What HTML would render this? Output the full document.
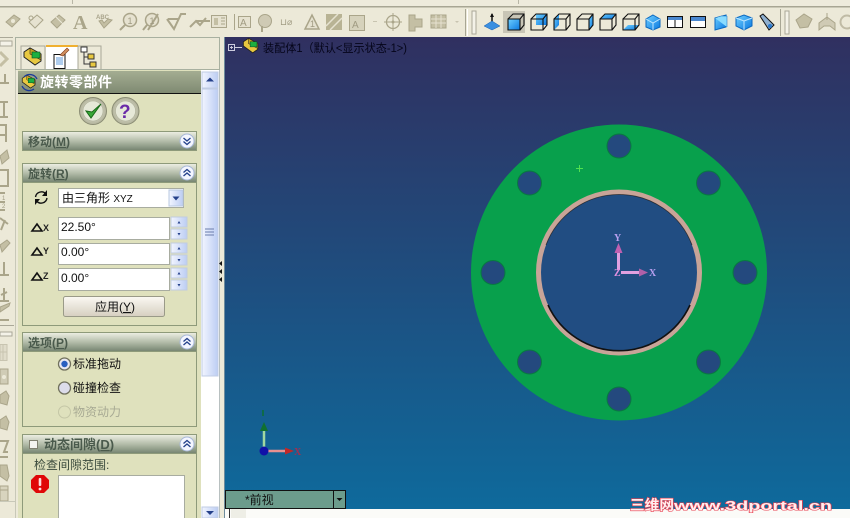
<!DOCTYPE html>
<html><head><meta charset="utf-8"><style>
html,body{margin:0;padding:0;background:#ece9d8;overflow:hidden}
svg{display:block}
text{font-family:"Liberation Sans","WenQuanYi Zen Hei","Noto Sans CJK SC",sans-serif;font-size:12px;fill:#111}
.h{font-weight:bold;fill:#4a5a4c;font-size:12px}
.f{fill:#c4bfa4;stroke:#aaa58a;stroke-width:1}
.l{fill:none;stroke:#aaa58a;stroke-width:2}
</style></head><body>
<svg width="850" height="518" viewBox="0 0 850 518" xmlns="http://www.w3.org/2000/svg">
<defs>
<linearGradient id="bg" x1="0" y1="0" x2="0" y2="1"><stop offset="0" stop-color="#303060"/><stop offset="1" stop-color="#0e6a9c"/></linearGradient>
<linearGradient id="hd" x1="0" y1="0" x2="0" y2="1"><stop offset="0" stop-color="#eef0e4"/><stop offset=".5" stop-color="#b4bdaa"/><stop offset="1" stop-color="#74836f"/></linearGradient>
<linearGradient id="ph" x1="0" y1="0" x2="0" y2="1"><stop offset="0" stop-color="#a4ad92"/><stop offset="1" stop-color="#7f8a72"/></linearGradient>
<linearGradient id="sb" x1="0" y1="0" x2="1" y2="0"><stop offset="0" stop-color="#f2f5ff"/><stop offset="1" stop-color="#bccdf3"/></linearGradient>
<linearGradient id="cu" x1="0" y1="0" x2="1" y2="1"><stop offset="0" stop-color="#6fd0ff"/><stop offset="1" stop-color="#0a78e0"/></linearGradient>
<linearGradient id="bt" x1="0" y1="0" x2="0" y2="1"><stop offset="0" stop-color="#fbf9f3"/><stop offset="1" stop-color="#d6cfc0"/></linearGradient>
<radialGradient id="rb"><stop offset="0" stop-color="#f4f3ee"/><stop offset="1" stop-color="#b2b39a"/></radialGradient>
<g id="chevU"><circle r="7" fill="#f4f6ff" stroke="#a8b8d8"/><path d="M-3.5 -.5L0 -3.5L3.5 -.5M-3.5 3L0 0L3.5 3" fill="none" stroke="#24408a" stroke-width="1.3"/></g>
<g id="chevD"><circle r="7" fill="#f4f6ff" stroke="#a8b8d8"/><path d="M-3.5 -3L0 0L3.5 -3M-3.5 .5L0 3.5L3.5 .5" fill="none" stroke="#24408a" stroke-width="1.3"/></g>
<g id="wire"><path d="M-7 -3H5V8H-7ZM-7 -3L-2 -8H9V3L5 8M5 -3L9 -8" fill="none" stroke="#111" stroke-width="1.1"/></g>
<g id="spin"><rect x="0" y="0" width="16" height="10" fill="url(#sb)" stroke="#c0cce0"/><rect x="0" y="12" width="16" height="10" fill="url(#sb)" stroke="#c0cce0"/><path d="M6.5 6.5L8 4L9.5 6.5ZM6.5 16L8 18.5L9.5 16Z" fill="#24408a"/></g>
<g id="asm"><path d="M-9 -5L-3 -9L8 -3V4L2 8L-9 0Z" fill="#e8c840" stroke="#222"/><path d="M-3 -9L8 -3V3L-3 -3Z" fill="#c9a020" stroke="#222" stroke-width=".6"/><rect x="-1" y="-5" width="8" height="6" fill="#1cb040" stroke="#0a5020" stroke-width=".6"/></g>
</defs>

<!-- top strip and toolbar -->
<rect width="850" height="37" fill="#ece9d8"/>
<rect y="0" width="850" height="6" fill="#eeebdc"/>
<rect y="6" width="850" height="1.5" fill="#a8a694"/>
<rect x="72" y="0" width="1" height="4" fill="#b8b6a6"/><rect x="518" y="0" width="1" height="4" fill="#b8b6a6"/>

<!-- faded toolbar icons -->
<g>
<path class="f" d="M6 22L14 15L20 19L12 27Z"/><circle cx="13" cy="21" r="2" fill="#ece9d8"/>
<path d="M29 22L37 15L43 20L35 28Z" fill="#e6e2d0" stroke="#aaa58a"/><circle cx="31" cy="18" r="2" fill="none" stroke="#aaa58a"/>
<path class="f" d="M51 22L59 15L65 20L57 28Z"/><path d="M55 16L63 24" stroke="#ece9d8"/>
<text x="73" y="29" style="font:bold 20px 'Liberation Serif',serif;fill:#aaa58a">A</text>
<text x="96" y="19" style="font:bold 6px 'Liberation Sans';fill:#a8a38a">ABC</text><path class="f" d="M99 21L104 28L112 20L108 19L104 23L102 20Z"/>
<circle cx="130" cy="20" r="6.5" fill="#e6e2d0" stroke="#aaa58a" stroke-width="1.5"/><path class="l" d="M125 25L120 30"/><text x="127.500" y="24" style="font-size:9px;fill:#a09b82">1</text>
<circle cx="152" cy="20" r="6.5" fill="#e6e2d0" stroke="#aaa58a" stroke-width="1.5"/><path class="l" d="M147 25L143 30M148 30L158 14"/><text x="149.500" y="24" style="font-size:9px;fill:#a09b82">1</text>
<path class="l" d="M167 19L174 29L181 14H186M168 19H179"/>
<path class="l" d="M190 27L196 21L200 25L206 18M196 21H210"/>
<rect x="211.500" y="15.500" width="15" height="12" fill="#e6e2d0" stroke="#aaa58a"/><rect x="214" y="18" width="4" height="7" fill="#c4bfa4"/><path d="M221 18h4M221 21h4M221 24h4" stroke="#aaa58a"/>
<path d="M234.500 14V30" stroke="#aaa58a"/><rect x="238.500" y="16.500" width="12" height="11" fill="#e6e2d0" stroke="#aaa58a"/><text x="240" y="26" style="font-size:10px;fill:#a09b82">A</text>
<circle cx="265" cy="21" r="6.500" fill="#cfcab4" stroke="#aaa58a"/><path class="l" d="M262 26V32"/>
<text x="280" y="25" style="font-size:9px;fill:#a09b82">⊔⌀</text>
<path d="M305 29L312 15L319 29Z" fill="#e6e2d0" stroke="#aaa58a" stroke-width="1.500"/><text x="310" y="27" style="font-size:9px;fill:#a09b82">1</text>
<rect x="326" y="14" width="16" height="16" fill="#b8b394"/><path d="M326 26L338 14M330 30L342 18" stroke="#e6e2d0" stroke-width="1.500"/>
<rect x="349.500" y="15.500" width="15" height="15" fill="#d6d2bc" stroke="#aaa58a"/><text x="352" y="28" style="font-size:10px;fill:#a09b82">A</text>
<path d="M373 21h4v1h-4z" fill="#c8c4b0"/>
<circle cx="393" cy="22" r="6.500" fill="none" stroke="#aaa58a" stroke-width="1.300"/><path d="M393 13V31M384 22H402" stroke="#aaa58a"/><circle cx="393" cy="22" r="1.500" fill="#aaa58a"/>
<path class="f" d="M409 15H415V19H422V27H415V31H409Z"/>
<rect x="431" y="15" width="15" height="13" fill="#c4bfa4" stroke="#aaa58a"/><path d="M431 19H446M431 23H446M436 15V28M441 15V28" stroke="#e6e2d0"/>
<path d="M455 21h4l-2 2z" fill="#c8c4b0"/>
</g>
<rect x="465" y="9" width="1" height="27" fill="#a8a694"/><rect x="467" y="9" width="1" height="27" fill="#fff"/>
<rect x="472" y="11" width="4" height="23" fill="#f4f2e8" stroke="#aaa898"/>

<!-- colored view icons -->
<path d="M492 14V25" stroke="#111" stroke-width="1.500"/><path d="M490 17L492 13L494 17Z" fill="#111"/><path d="M484 26L492 21L500 26L492 30Z" fill="#3a8fe0" stroke="#1a60b0" stroke-width=".5"/>
<rect x="503" y="11" width="22" height="22" fill="#c8c5b6"/>
<g transform="translate(515,22)"><path d="M-7 -3H5V8H-7Z" fill="url(#cu)"/><use href="#wire"/></g>
<g transform="translate(538,22)"><path d="M-2 -8H9V3H-2Z" fill="url(#cu)"/><use href="#wire"/></g>
<g transform="translate(561,22)"><path d="M-7 -3L-2 -8V3L-7 8Z" fill="url(#cu)"/><use href="#wire"/></g>
<g transform="translate(584,22)"><path d="M5 -3L9 -8V3L5 8Z" fill="url(#cu)"/><use href="#wire"/></g>
<g transform="translate(607,22)"><path d="M-7 -3L-2 -8H9L5 -3Z" fill="url(#cu)"/><use href="#wire"/></g>
<g transform="translate(630,22)"><path d="M-7 8L-2 3H9L5 8Z" fill="url(#cu)"/><use href="#wire"/></g>
<path d="M653 15L660 19V27L653 30L646 27V19Z" fill="url(#cu)" stroke="#0a68c0"/><path d="M646 19L653 23L660 19M653 23V30" stroke="#bfe6ff" fill="none"/>
<rect x="667.500" y="16.500" width="15" height="11" fill="#fff" stroke="#111"/><rect x="668" y="17" width="14" height="3" fill="#4a88d0"/><path d="M675 20V27" stroke="#111"/>
<rect x="690.500" y="16.500" width="15" height="11" fill="#fff" stroke="#111"/><rect x="691" y="17" width="14" height="4" fill="#4a88d0"/>
<path d="M715 18L726 15V27L715 30Z" fill="url(#cu)" stroke="#0a68c0"/><path d="M715 18L721 16H727V27" fill="#8adcff" stroke="#0a68c0" stroke-width=".5"/>
<path d="M736 18L744 15L752 18V26L744 30L736 26Z" fill="url(#cu)" stroke="#0a68c0"/><path d="M736 18L744 21L752 18M744 21V30" stroke="#bfe6ff" fill="none"/>
<path d="M760 16L763 14L774 25L769 30Z" fill="#8fb0d0" stroke="#111"/><circle cx="770" cy="26" r="2" fill="#2a7ad0"/>
<rect x="780" y="9" width="1" height="27" fill="#a8a694"/>
<rect x="785" y="11" width="4" height="23" fill="#f4f2e8" stroke="#aaa898"/>
<path class="f" d="M796 20L804 14L812 19L808 27L800 28Z"/>
<path d="M819 30V23L827 17L835 23V30L830 26H824Z" fill="#cfcab4" stroke="#aaa58a"/><path d="M827 13V20" stroke="#aaa58a"/>
<circle cx="847" cy="22" r="6.500" fill="none" stroke="#c0bba5" stroke-width="2"/>

<!-- left column -->
<rect x="0" y="37" width="225" height="481" fill="#ece9d8"/>
<rect x="0" y="37" width="13" height="1" fill="#aaa898"/><rect x="0" y="41" width="12" height="5" fill="#f4f2e8" stroke="#aaa898"/>
<rect x="15" y="37" width="1" height="481" fill="#c8c8b8"/>
<path d="M0 52L7 59L0 66" fill="none" stroke="#c4bfa4" stroke-width="3"/>
<path class="l" d="M0 83H9M5 74V83"/>
<path class="l" d="M0 102H8M0 117H8M4 102V117"/>
<path class="l" d="M0 125H6V142M0 135H6"/>
<path class="f" d="M0 156L7 150L9 158L2 164Z"/>
<path class="l" d="M0 170H8V186H0"/>
<text x="2" y="200" style="font-size:6px;fill:#a09b82">1</text><text x="2" y="208" style="font-size:6px;fill:#a09b82">2</text><path class="l" d="M0 193H5M0 202H5M0 210H5"/>
<path class="l" d="M0 218L8 224M5 220L1 230"/>
<path class="f" d="M0 245L7 240L10 243L2 252Z"/>
<path class="l" d="M4 262V275H9M0 275H9"/>
<path class="l" d="M0 301H9M4 288V300M1 295L7 292"/>
<path class="f" d="M0 307L10 303L9 306L0 312Z"/><path class="l" d="M0 320H9"/>
<rect x="0" y="325" width="14" height="1" fill="#aaa898"/><rect x="0" y="332" width="12" height="4" fill="#f4f2e8" stroke="#aaa898"/>
<rect x="0" y="344.500" width="7" height="16" fill="#e0dcca" stroke="#c8c4b0"/><path d="M0 352H7M3 345V360" stroke="#c8c4b0"/>
<rect x="0" y="369" width="8" height="15" fill="#d0ccb6" stroke="#aaa58a"/><circle cx="4" cy="377" r="2" fill="#ece9d8"/>
<path class="f" d="M0 395L6 391L9 396L7 405L0 403Z"/>
<path class="f" d="M0 420L6 416L9 422L7 430L0 428Z"/>
<path class="l" d="M0 441H8L4 452H8M0 457H8"/>
<path class="f" d="M0 465H7L9 476L7 481L0 476Z"/>
<rect x="0" y="486" width="8" height="15" fill="#d8d4be" stroke="#aaa58a"/><path d="M0 490H8" stroke="#aaa58a"/>
<rect x="0" y="501" width="15" height="1" fill="#c8c8b8"/>

<!-- tab bar -->
<path d="M15.500 70V37.500H219.500V70" fill="none" stroke="#a8b0a0"/>
<rect x="21" y="46" width="24" height="24" fill="#ece9d8" stroke="#a8a898"/>
<g transform="translate(33,57)"><use href="#asm"/></g>
<rect x="46" y="45" width="32" height="25" fill="#fff"/><rect x="46" y="45" width="32" height="2" fill="#f0b030"/>
<path d="M54 54.500H65V68.500H54Z" fill="#fff" stroke="#111"/><path d="M56 58h7M56 60h7M56 62h7M56 64h7" stroke="#2a7ad0" stroke-width=".8"/>
<path d="M60 55L67 48L69 50L63 56Z" fill="#d09060" stroke="#803818" stroke-width=".6"/>
<rect x="78" y="46" width="23" height="24" fill="#ece9d8" stroke="#a8a898"/>
<path d="M84 50V64H90M84 57H90" fill="none" stroke="#333"/><rect x="81" y="47" width="6" height="5" fill="#fff" stroke="#333"/><rect x="88" y="54" width="6" height="5" fill="#e8c840" stroke="#333"/><rect x="90" y="62" width="6" height="5" fill="#e8c840" stroke="#333"/>
<rect x="15" y="69" width="205" height="1" fill="#a8b0a0"/>

<!-- panel -->
<rect x="18" y="70" width="183" height="448" fill="#dfe1bd"/>
<rect x="18" y="71" width="183" height="22" fill="url(#ph)"/>
<rect x="18" y="93" width="183" height="1" fill="#111"/>
<g transform="translate(29,82) scale(.75)"><use href="#asm"/></g><path d="M22 86A8 8 0 0 0 34 89M24 77A8 8 0 0 1 37 79" fill="none" stroke="#1a3a9a" stroke-width="1.300"/>
<text x="40" y="87" style="font-size:14px;font-weight:bold;fill:#fff;letter-spacing:.5px">旋转零部件</text>

<circle cx="93" cy="111" r="13.500" fill="url(#rb)" stroke="#8a8c74"/><circle cx="93" cy="111" r="10" fill="#e6e8d8" stroke="#b0b29a" stroke-width=".6"/>
<path d="M86 111L91 118L101 104L92 112Z" fill="#38a838" stroke="#186818"/>
<circle cx="125.500" cy="111" r="13.500" fill="url(#rb)" stroke="#8a8c74"/><circle cx="125.500" cy="111" r="10" fill="#e6e8d8" stroke="#b0b29a" stroke-width=".6"/>
<text x="119" y="118" style="font:bold 19px 'Liberation Sans',sans-serif;fill:#6a2aa8">?</text>

<!-- move -->
<rect x="22.500" y="131.500" width="174" height="19" fill="url(#hd)" stroke="#8e9a7a"/>
<text class="h" x="28" y="146">移动(<tspan text-decoration="underline">M</tspan>)</text>
<use href="#chevD" x="187" y="141"/>

<!-- rotate -->
<rect x="22.500" y="163.500" width="174" height="162" fill="#dfe1bd" stroke="#8e9a7a"/>
<rect x="22.500" y="163.500" width="174" height="19" fill="url(#hd)" stroke="#8e9a7a"/>
<text class="h" x="28" y="178">旋转(<tspan text-decoration="underline">R</tspan>)</text>
<use href="#chevU" x="187" y="173"/>
<path d="M35.500 197A6 6 0 0 1 46 194M47 198A6 6 0 0 1 36.500 201" fill="none" stroke="#111" stroke-width="1.400"/><path d="M47 190V196H42ZM35 205V199H40Z" fill="#111"/>
<rect x="58.500" y="188.500" width="125" height="19" fill="#fff" stroke="#a8aca0"/>
<text x="62" y="202">由三角形 <tspan style="font-size:10px">XYZ</tspan></text>
<rect x="169" y="190" width="14" height="16" fill="url(#sb)" stroke="#b8c8e0"/><path d="M172.500 196.500H179.500L176 200.500Z" fill="#24408a"/>

<path d="M32 231L37 224L42 231Z" fill="none" stroke="#111" stroke-width="1.600"/><text x="43" y="231" style="font-size:9px;font-weight:bold;fill:#222">X</text>
<rect x="58.500" y="217.500" width="111" height="22" fill="#fff" stroke="#a8aca0"/><text x="61" y="231">22.50°</text>
<use href="#spin" x="171" y="217"/>
<path d="M32 255L37 248L42 255Z" fill="none" stroke="#111" stroke-width="1.600"/><text x="43" y="254" style="font-size:9px;font-weight:bold;fill:#222">Y</text>
<rect x="58.500" y="243.500" width="111" height="21" fill="#fff" stroke="#a8aca0"/><text x="61" y="256">0.00°</text>
<use href="#spin" x="171" y="243"/>
<path d="M32 280L37 273L42 280Z" fill="none" stroke="#111" stroke-width="1.600"/><text x="43" y="279" style="font-size:9px;font-weight:bold;fill:#222">Z</text>
<rect x="58.500" y="268.500" width="111" height="22" fill="#fff" stroke="#a8aca0"/><text x="61" y="282">0.00°</text>
<use href="#spin" x="171" y="268"/>
<rect x="63.500" y="296.500" width="101" height="20" rx="2" fill="url(#bt)" stroke="#9a9a88"/>
<text x="95" y="311">应用(<tspan text-decoration="underline">Y</tspan>)</text>

<!-- options -->
<rect x="22.500" y="332.500" width="174" height="94" fill="#dfe1bd" stroke="#8e9a7a"/>
<rect x="22.500" y="332.500" width="174" height="19" fill="url(#hd)" stroke="#8e9a7a"/>
<text class="h" x="28" y="347">选项(<tspan text-decoration="underline">P</tspan>)</text>
<use href="#chevU" x="187" y="342"/>
<circle cx="64.500" cy="364" r="6" fill="#e8e8f0" stroke="#70705c" stroke-width="1.300"/><circle cx="64.500" cy="364" r="3.200" fill="#2a60c0"/>
<text x="73" y="368">标准拖动</text>
<circle cx="64.500" cy="388" r="6" fill="#dcdcea" stroke="#70705c" stroke-width="1.300"/>
<text x="73" y="392">碰撞检查</text>
<circle cx="64.500" cy="412" r="6" fill="#dfe1bd" stroke="#c4c6a6"/>
<text x="73" y="416" style="fill:#a8aa94">物资动力</text>

<!-- clearance -->
<rect x="22.500" y="434.500" width="174" height="90" fill="#dfe1bd" stroke="#8e9a7a"/>
<rect x="22.500" y="434.500" width="174" height="19" fill="url(#hd)" stroke="#8e9a7a"/>
<rect x="29.500" y="440.500" width="8" height="8" fill="#f4f4f0" stroke="#808070"/>
<text class="h" x="44" y="449" style="font-size:13px">动态间隙(<tspan text-decoration="underline">D</tspan>)</text>
<use href="#chevU" x="187" y="444"/>
<text x="34" y="469" style="fill:#3a4a3c">检查间隙范围:</text>
<path d="M36 475H44L49 480V488L44 493H36L31 488V480Z" fill="#e00808"/><rect x="38.700" y="478" width="2.600" height="8" rx="1" fill="#fdd"/><circle cx="40" cy="489" r="1.400" fill="#fdd"/>
<rect x="58.500" y="475.500" width="126" height="50" fill="#fff" stroke="#a8aca0"/>

<!-- scrollbar -->
<rect x="201" y="70" width="18" height="448" fill="#fff"/>
<rect x="219" y="70" width="1" height="448" fill="#b8c0c0"/>
<rect x="202" y="72" width="16" height="16" fill="url(#sb)" stroke="#c0cce4"/><path d="M206 81.500H214L210 77.500Z" fill="#24408a"/>
<rect x="202" y="89" width="16" height="287" fill="url(#sb)" stroke="#c0cce4"/>
<path d="M205 229H214M205 232H214M205 235H214" stroke="#6a7cac"/>
<rect x="202" y="507" width="16" height="11" fill="url(#sb)" stroke="#c0cce4"/><path d="M206 511H214L210 515Z" fill="#24408a"/>
<path d="M222 261L219 263.500L222 266ZM222 269L219 271.500L222 274ZM222 277L219 279.500L222 282Z" fill="#111"/>
<rect x="224" y="37" width="1" height="481" fill="#6e8c9c"/>

<!-- viewport -->
<rect x="225" y="37" width="625" height="472" fill="url(#bg)"/>
<rect x="225" y="509" width="625" height="9" fill="#fbfbf8"/>
<rect x="231" y="509" width="15" height="9" fill="#eeeee6"/>
<rect x="229" y="509" width="1" height="9" fill="#333"/>

<!-- disc -->
<circle cx="619" cy="272.500" r="148" fill="#08a04c"/>
<circle cx="619" cy="272.500" r="83" fill="#c8a498"/>
<circle cx="619" cy="272.500" r="78" fill="#214d82"/>
<path d="M548 305A78 78 0 0 0 690 305" fill="none" stroke="#111" stroke-width="1.600"/>
<path d="M546 245A78 78 0 0 1 692 245" fill="none" stroke="#111" stroke-width=".8" opacity=".7"/>
<g fill="#24497e" stroke="#087a40">
<circle cx="619" cy="146" r="12"/><circle cx="708.500" cy="183" r="12"/><circle cx="745" cy="272.500" r="12"/><circle cx="708.500" cy="362" r="12"/><circle cx="619" cy="399" r="12"/><circle cx="529.500" cy="362" r="12"/><circle cx="493" cy="272.500" r="12"/><circle cx="529.500" cy="183" r="12"/>
</g>
<path d="M576 168.500H583M579.500 165V172" stroke="#50e050"/>

<!-- center triad -->
<path d="M618.500 270V250" stroke="#e0a0e0" stroke-width="3"/><path d="M614.500 253L618.500 243L622.500 253Z" fill="#c060b0"/>
<path d="M621 272.500H640" stroke="#e0a0e0" stroke-width="3"/><path d="M639 268.500L648 272.500L639 276.500Z" fill="#b060a8"/>
<text x="614" y="241" style="font:bold 10px 'Liberation Serif',serif;fill:#b8a0f0">Y</text>
<text x="649" y="276" style="font:bold 10px 'Liberation Serif',serif;fill:#b8a0f0">X</text>
<text x="614" y="276" style="font:bold 10px 'Liberation Serif',serif;fill:#e090e0">Z</text>

<!-- reference triad -->
<path d="M264 448V429" stroke="#a0d8a0" stroke-width="2.500"/><path d="M260 431L264 422L268 431Z" fill="#107030"/>
<path d="M263 416V410" stroke="#0e6a4a" stroke-width="2"/>
<path d="M268 451H288" stroke="#e89090" stroke-width="2.500"/><path d="M285 447.500L294 451L285 454.500Z" fill="#c02828"/>
<text x="294" y="455" style="font:bold 10px 'Liberation Serif',serif;fill:#a03050">X</text>
<circle cx="264" cy="451" r="4.500" fill="#1010a8"/>

<!-- tree -->
<rect x="228.500" y="44.500" width="6" height="6" fill="none" stroke="#ccd"/><path d="M230 47.500H233M231.500 46V49M235 47.500H242" stroke="#ccd" stroke-width=".9"/>
<g transform="translate(251,46) scale(.85)"><use href="#asm"/></g>
<text x="263" y="52" textLength="144" lengthAdjust="spacingAndGlyphs" style="font-size:11.500px;fill:#05051a">装配体1（默认&lt;显示状态-1&gt;)</text>

<!-- view tab -->
<rect x="225.500" y="490.500" width="120" height="18" fill="#6c9c8c" stroke="#111"/>
<path d="M333.500 491V508" stroke="#111"/>
<path d="M336.500 498H342.500L339.500 501Z" fill="#111"/>
<text x="245" y="504" style="fill:#111">*前视</text>

<!-- watermark -->
<text x="630" y="510" textLength="44" lengthAdjust="spacingAndGlyphs" style="font-size:14px;font-weight:bold;fill:#ffeeee;stroke:#e84050;stroke-width:1.200px;paint-order:stroke">三维网</text>
<text x="674" y="510" textLength="158" lengthAdjust="spacingAndGlyphs" style="font-size:13px;font-weight:bold;fill:#ffeeee;stroke:#e84050;stroke-width:1.100px;paint-order:stroke">www.3dportal.cn</text>
</svg>
</body></html>
